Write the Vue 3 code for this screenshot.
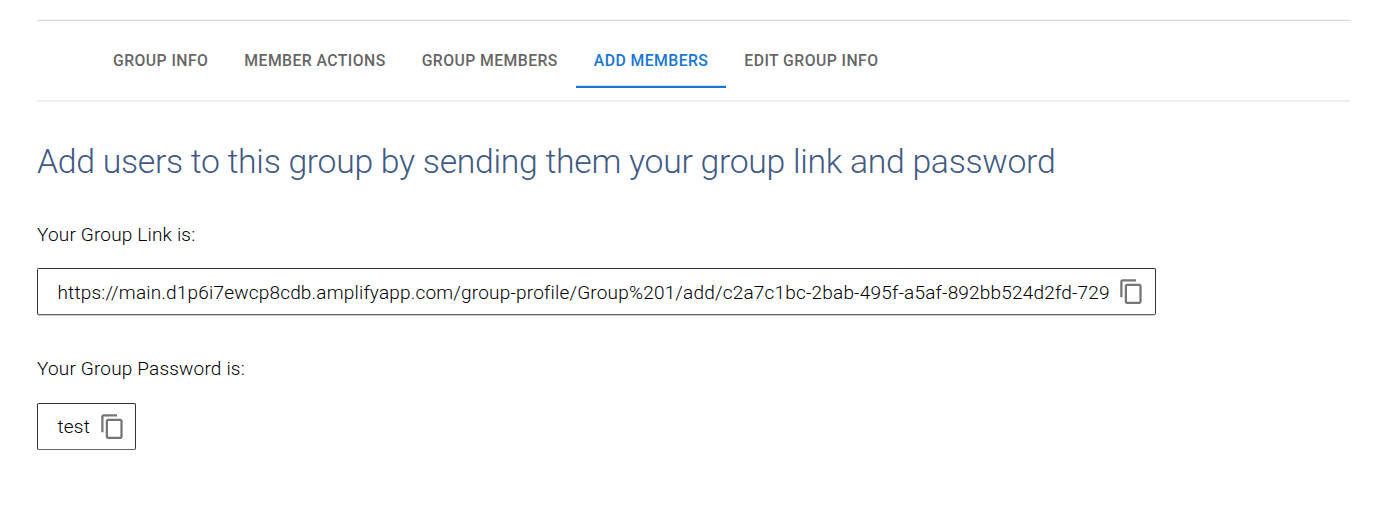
<script setup>
const tabs = ['Group Info', 'Member Actions', 'Group Members', 'Add Members', 'Edit Group Info']
const active = 'Add Members'
const fields = [
  { label: 'Your Group Link is:', value: 'https://main.d1p6i7ewcp8cdb.amplifyapp.com/group-profile/Group%201/add/c2a7c1bc-2bab-495f-a5af-892bb524d2fd-729' },
  { label: 'Your Group Password is:', value: 'test' },
]
</script>

<template>
  <main class="page">
    <nav class="tabs">
      <button v-for="t in tabs" :key="t" class="tab" :class="{ active: t === active }">{{ t }}</button>
    </nav>
    <h1 class="title">Add users to this group by sending them your group link and password</h1>
    <div class="fields">
      <section v-for="f in fields" :key="f.label" class="field">
        <p class="label">{{ f.label }}</p>
        <div class="box">
          <span class="value">{{ f.value }}</span>
          <svg class="copy" viewBox="0 0 24 24"><path d="M16 1H4c-1.100 0-2 .9-2 2v14h2V3h12V1zm3 4H8c-1.100 0-2 .9-2 2v14c0 1.100.9 2 2 2h11c1.100 0 2-.9 2-2V7c0-1.100-.9-2-2-2zm0 16H8V7h11v14z" /></svg>
        </div>
      </section>
    </div>
  </main>
</template>

<style>
body { background: #fff; }
</style>

<style scoped>
.page { padding: 20px 37px 0; font-family: Roboto, "Liberation Sans", sans-serif; color: #000; }
.tabs { box-sizing: border-box; height: 82px; padding: 12px 0 0 58px; display: flex; border-top: 1px solid #dedede; border-bottom: 2px solid #eee; box-shadow: 0 -1px #f5f5f5; }
.tab { box-sizing: border-box; height: 55px; padding: 2px 18px 0; border: 0; border-bottom: 2px solid transparent; background: none; font: 500 15.75px/20px Roboto, sans-serif; letter-spacing: .44px; text-transform: uppercase; color: #666; white-space: nowrap; }
.tab.active { color: #1976d2; border-color: #1976d2; box-shadow: inset 0 -1px #d1e3f6; }
.title { margin: 39px 0 0; font-size: 33.75px; line-height: 42px; font-weight: 300; letter-spacing: -.288px; color: #3f5a85; white-space: nowrap; }
.fields { display: grid; gap: 42px; margin-top: 39.8px; }
.label { margin: 0; font-size: 19px; line-height: 24px; font-weight: 300; letter-spacing: .18px; }
.box { box-sizing: border-box; width: max-content; height: 47px; margin-top: 21.5px; padding: 0 9.600px 0 19.5px; display: flex; align-items: center; border: 1px solid #333; border-bottom-color: #666; border-radius: 2px; box-shadow: 0 1px #ccc; }
.value { padding-top: 1.6px; font-size: 19px; line-height: 24px; font-weight: 300; letter-spacing: .187px; white-space: nowrap; }
.copy { width: 27px; height: 27px; margin: 0 0 0 8.600px; fill: #757575; }
</style>
